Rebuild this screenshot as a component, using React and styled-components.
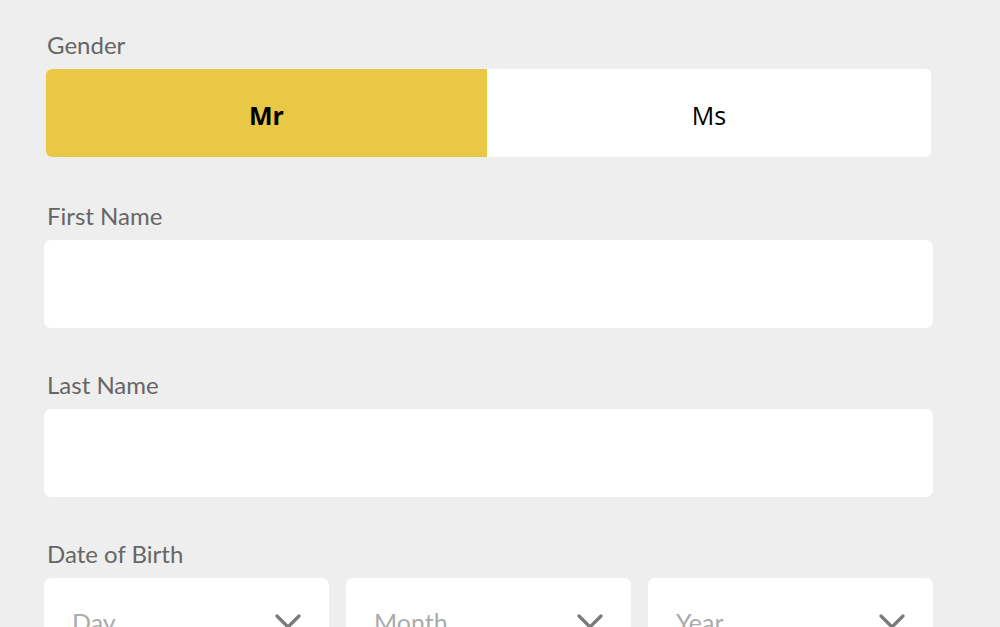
import React, { useState } from "react";
import styled, { createGlobalStyle } from "styled-components";

const GlobalStyle = createGlobalStyle`
  html, body {
    margin: 0;
    padding: 0;
    background: #eeeeee;
    font-family: Lato, "Open Sans", sans-serif;
  }
`;

function Chevron() {
  return (
    <svg width="26" height="16" viewBox="0 0 26 16" fill="none">
      <path d="M2 2 L13 13 L24 2" stroke="#7a7a7a" strokeWidth="3.2" strokeLinecap="round" strokeLinejoin="round" />
    </svg>
  );
}

function App() {
  const [gender, setGender] = useState("mr");

  return (
    <>
      <GlobalStyle />
      <Form>
        <Field>
          <Label>Gender</Label>
          <Toggle>
            <ToggleButton active={gender === "mr"} onClick={() => setGender("mr")}>
              Mr
            </ToggleButton>
            <ToggleButton active={gender === "ms"} onClick={() => setGender("ms")}>
              Ms
            </ToggleButton>
          </Toggle>
        </Field>
        <Field>
          <Label>First Name</Label>
          <Input type="text" />
        </Field>
        <Field>
          <Label>Last Name</Label>
          <Input type="text" />
        </Field>
        <Field>
          <Label>Date of Birth</Label>
          <DateRow>
            {["Day", "Month", "Year"].map((p) => (
              <Select key={p}>
                <Placeholder>{p}</Placeholder>
                <Chevron />
              </Select>
            ))}
          </DateRow>
        </Field>
      </Form>
    </>
  );
}

const Form = styled.div`
  width: 889px;
  padding: 30px 0 0 44px;
  display: flex;
  flex-direction: column;
  gap: 42px;
`;

const Field = styled.div`
  display: flex;
  flex-direction: column;
`;

const Label = styled.label`
  font-size: 24px;
  line-height: 30px;
  color: #666666;
  padding-left: 3px;
  margin-bottom: 9px;
`;

const Toggle = styled.div`
  display: flex;
  margin: 0 2px 2px;
  height: 88px;
  border-radius: 6px;
  overflow: hidden;
  background: #ffffff;
`;

const ToggleButton = styled.button`
  flex: ${(p) => (p.active ? "0 0 441px" : "1")};
  border: none;
  margin: 0;
  padding: 4px 0 0;
  font-family: "Open Sans", "Noto Sans", sans-serif;
  font-size: 25px;
  font-weight: ${(p) => (p.active ? 700 : 400)};
  color: #000000;
  background: ${(p) => (p.active ? "#e9c845" : "#ffffff")};
  cursor: pointer;
`;

const Input = styled.input`
  height: 88px;
  box-sizing: border-box;
  border: none;
  border-radius: 7px;
  background: #ffffff;
  padding: 0 28px;
  font-size: 23px;
  outline: none;
`;

const DateRow = styled.div`
  display: grid;
  grid-template-columns: repeat(3, 1fr);
  gap: 17px;
`;

const Select = styled.div`
  height: 88px;
  border-radius: 7px;
  background: #ffffff;
  display: flex;
  align-items: center;
  justify-content: space-between;
  padding: 0 28px;
`;

const Placeholder = styled.span`
  font-size: 25px;
  color: #ababab;
`;

export default App;
